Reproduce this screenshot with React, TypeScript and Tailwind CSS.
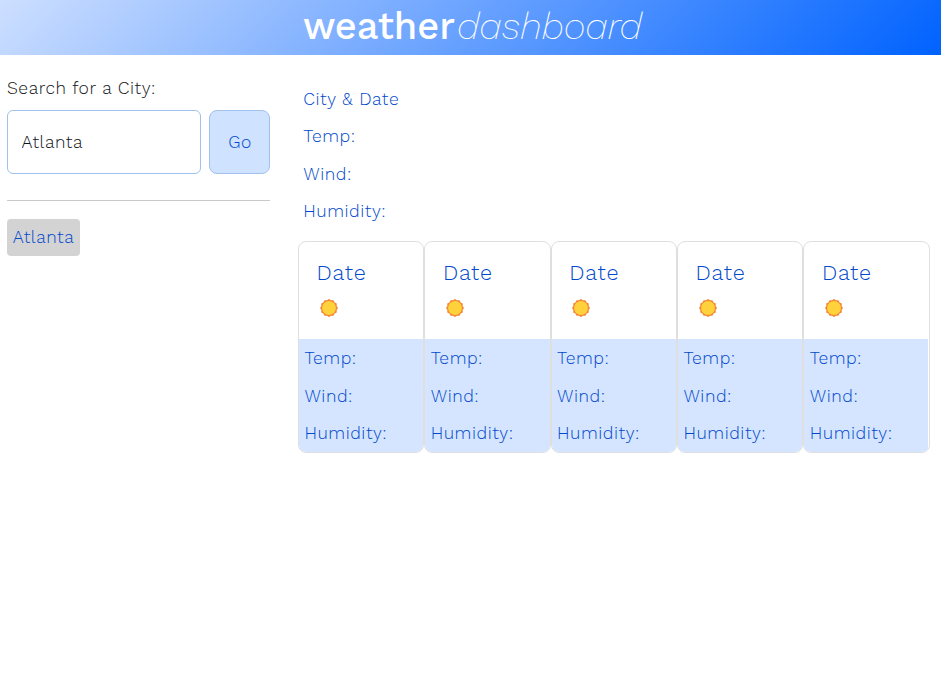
const days = [1, 2, 3, 4, 5];
const readings = ["Temp:", "Wind:", "Humidity:"];

function Sun() {
  const pts = Array.from({ length: 24 }, (_, i) => {
    const r = i % 2 ? 7.9 : 9;
    const a = (i * Math.PI) / 12;
    return `${(9 + r * Math.cos(a)).toFixed(2)},${(9 + r * Math.sin(a)).toFixed(2)}`;
  }).join(" ");
  return (
    <svg width="18" height="18" viewBox="0 0 18 18" className="ml-[3px]">
      <polygon points={pts} fill="#f58634" />
      <circle cx="9" cy="9" r="6.9" fill="#ffd23c" />
    </svg>
  );
}

export default function App() {
  return (
    <div className="min-h-[692px] bg-white font-['Work_Sans','Inter',sans-serif] text-[17.5px] leading-6 font-light tracking-[0.54px] text-[#0048cc]">
      <header className="flex h-[55px] bg-[linear-gradient(135deg,#cddfff,#0062ff)] pl-[303px] text-[38px] leading-[53px] tracking-normal text-white">
        <h1 className="font-medium tracking-[-0.05px]">weather</h1>
        <span className="ml-[2px] font-extralight tracking-[-0.1px] italic">dashboard</span>
      </header>
      <div className="flex">
        <aside className="ml-[7px] w-[263px] shrink-0 pt-[21px]">
          <label htmlFor="city" className="block text-[#101418]">Search for a City:</label>
          <div className="mt-[10px] flex gap-2">
            <input id="city" defaultValue="Atlanta" className="h-16 w-[194px] rounded-md border border-[#a0c0ee] px-[13.5px] tracking-[0.54px] text-[#101418]" />
            <button className="h-16 w-[61px] rounded-lg border border-[#a0c0ee] bg-[#cfe2ff] pl-px tracking-[0.54px]">Go</button>
          </div>
          <hr className="mt-[26px] border-[#c8c9ca]" />
          <button className="mt-[18px] block h-[37px] w-[73px] rounded bg-[#d3d3d3] pb-px tracking-[0.54px]">Atlanta</button>
        </aside>
        <main className="ml-7 w-[631.7px] pt-8">
          <section className="flex flex-col gap-[13.4px] pl-[5.3px]">
            {["City & Date", ...readings].map((text) => <p key={text}>{text}</p>)}
          </section>
          <section className="mt-[18px] grid grid-cols-5">
            {days.map((day) => (
              <article key={day} className="group h-[212px] overflow-hidden rounded-lg border border-[#dfdfdf]">
                <div className="h-[97px] pl-[17.6px] pt-[18px]">
                  <h2 className="text-[21.6px] leading-[26px] tracking-[0.8px]">Date</h2>
                  <div className="mt-[13px]"><Sun /></div>
                </div>
                <div className="flex h-[114px] flex-col gap-[13.5px] bg-[#d5e5ff] pl-[5.4px] pt-[7px] group-last:mr-px">
                  {readings.map((text) => <p key={text}>{text}</p>)}
                </div>
              </article>
            ))}
          </section>
        </main>
      </div>
    </div>
  );
}
